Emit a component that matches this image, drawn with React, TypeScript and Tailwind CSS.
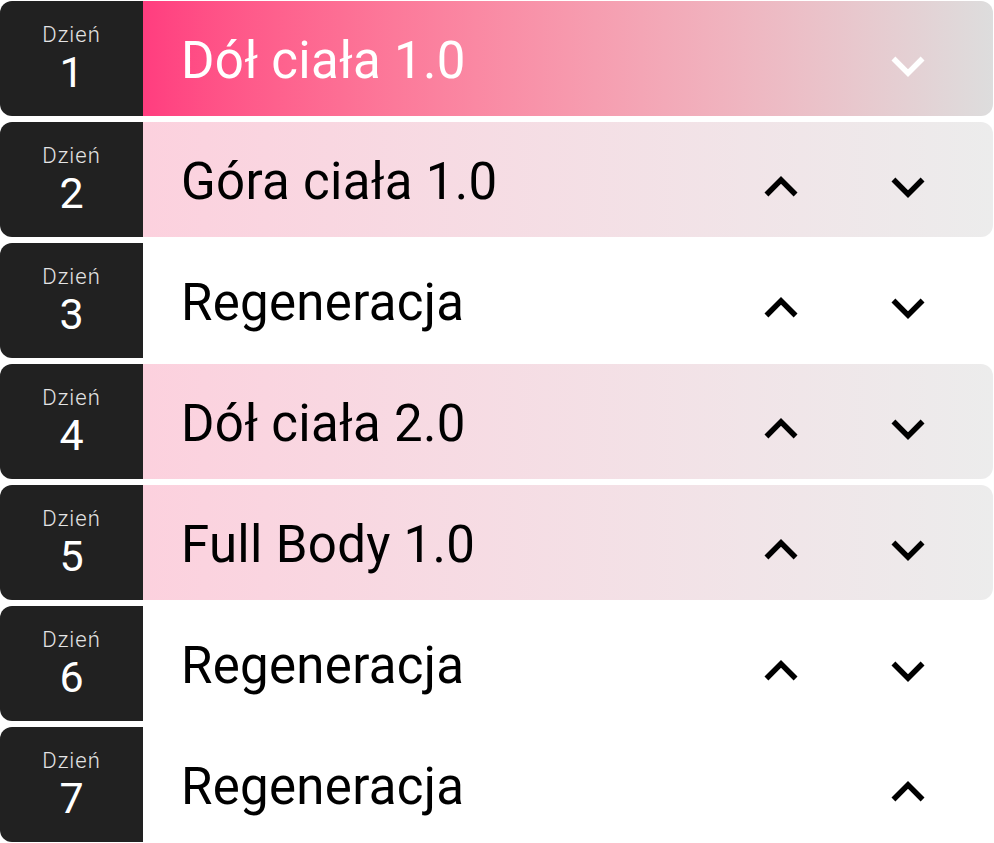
import React from 'react'

type Day = { n: number; title: string; tone: 'hot' | 'soft' | 'plain'; up: boolean; down: boolean }

const days: Day[] = [
  { n: 1, title: 'Dół ciała 1.0', tone: 'hot', up: false, down: true },
  { n: 2, title: 'Góra ciała 1.0', tone: 'soft', up: true, down: true },
  { n: 3, title: 'Regeneracja', tone: 'plain', up: true, down: true },
  { n: 4, title: 'Dół ciała 2.0', tone: 'soft', up: true, down: true },
  { n: 5, title: 'Full Body 1.0', tone: 'soft', up: true, down: true },
  { n: 6, title: 'Regeneracja', tone: 'plain', up: true, down: true },
  { n: 7, title: 'Regeneracja', tone: 'plain', up: true, down: false },
]

function Chevron({ dir, color }: { dir: 'up' | 'down'; color: string }) {
  const d = dir === 'down'
    ? 'M16.59 8.59L12 13.17 7.41 8.59 6 10l6 6 6-6z'
    : 'M12 8l-6 6 1.41 1.41L12 10.83l4.59 4.58L18 14z'
  return (
    <svg width="66" height="66" viewBox="0 0 24 24" className="shrink-0" style={{ fill: color }}>
      <path d={d} />
    </svg>
  )
}

function Row({ day }: { day: Day }) {
  const panel =
    day.tone === 'hot'
      ? 'bg-gradient-to-r from-[#ff3d7f] to-[#dddddd]'
      : day.tone === 'soft'
      ? 'bg-gradient-to-r from-[#fcd1de] to-[#ececec]'
      : 'bg-white'
  const ink = day.tone === 'hot' ? '#ffffff' : '#000000'
  return (
    <div className="flex h-[115px]">
      <div className="w-[143px] shrink-0 rounded-l-[12px] bg-[#212121] flex flex-col items-center justify-center">
        <span className="text-[22px] leading-[22px] tracking-[1px] font-light text-[#e4e4e4]">Dzień</span>
        <span className="text-[43px] leading-[44px] text-white mt-[4px]">{day.n}</span>
      </div>
      <div className={`flex-1 flex items-center rounded-r-[12px] pl-[38px] pr-[52px] ${panel}`}>
        <span className={`text-[51px] leading-none tracking-[0.3px] pt-[3px] ${day.tone === 'hot' ? 'text-white' : 'text-black'}`}>
          {day.title}
        </span>
        <div className="ml-auto flex items-center gap-[61px] pt-[14px]">
          {day.up && <Chevron dir="up" color={ink} />}
          {day.down && <Chevron dir="down" color={ink} />}
        </div>
      </div>
    </div>
  )
}

export default function App() {
  return (
    <div className="w-[994px] h-[843px] bg-white pt-[1px] pr-[1px] flex flex-col gap-[6px]" style={{ fontFamily: 'Roboto, sans-serif' }}>
      {days.map(d => <Row key={d.n} day={d} />)}
    </div>
  )
}
